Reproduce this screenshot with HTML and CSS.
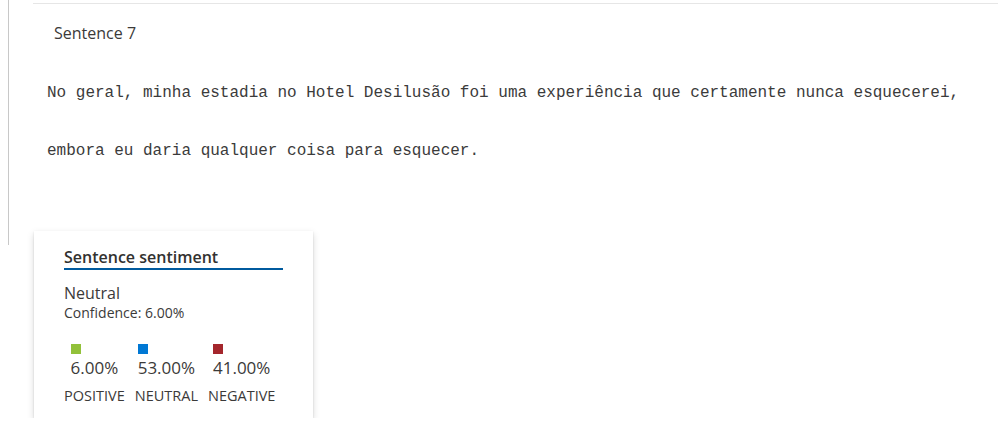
FILE: index.html
```html
<!DOCTYPE html>
<html>
<head>
<meta charset="utf-8">
<link rel="stylesheet" href="styles.css">
</head>
<body>
<div class="section">
  <div class="rule"></div>
  <div class="sentence-title">Sentence 7</div>
  <div class="sentence-text">No geral, minha estadia no Hotel Desilusão foi uma experiência que certamente nunca esquecerei,<br>embora eu daria qualquer coisa para esquecer.</div>
</div>
<div class="card">
  <div class="card-title">Sentence sentiment</div>
  <div class="label">Neutral</div>
  <div class="confidence">Confidence: 6.00%</div>
  <div class="scores">
    <div class="score">
      <div class="value-wrap">
        <span class="swatch swatch-pos"></span>
        <span class="value">6.00%</span>
      </div>
      <div class="name">POSITIVE</div>
    </div>
    <div class="score">
      <div class="value-wrap">
        <span class="swatch swatch-neu"></span>
        <span class="value">53.00%</span>
      </div>
      <div class="name">NEUTRAL</div>
    </div>
    <div class="score">
      <div class="value-wrap">
        <span class="swatch swatch-neg"></span>
        <span class="value">41.00%</span>
      </div>
      <div class="name">NEGATIVE</div>
    </div>
  </div>
</div>
</body>
</html>
```
FILE: styles.css
```css
html, body {
  margin: 0;
  padding: 0;
  background: #ffffff;
}
body {
  font-family: "Open Sans", "Noto Sans", sans-serif;
  color: #323130;
}
.section {
  margin-left: 8px;
  border-left: 1px solid #c8c8c8;
  height: 245px;
  box-sizing: border-box;
  padding-top: 3px;
}
.rule {
  margin-left: 24px;
  border-top: 1px solid #e6e6e6;
}
.sentence-title {
  margin-top: 18px;
  margin-left: 45px;
  font-size: 16px;
  line-height: 22px;
  color: #3b3a39;
}
.sentence-text {
  margin-top: 20px;
  margin-left: 38px;
  font-family: "Liberation Mono", "DejaVu Sans Mono", monospace;
  font-size: 16px;
  line-height: 58px;
  color: #3b3b3b;
}
.card {
  position: relative;
  margin-top: -14px;
  margin-left: 34px;
  width: 279px;
  height: 187px;
  box-sizing: border-box;
  padding: 15px 30px 0 30px;
  background: #ffffff;
  box-shadow: 0 3.2px 7.2px rgba(0,0,0,0.15), 0 0.6px 1.8px rgba(0,0,0,0.12);
}
.card-title {
  font-size: 16px;
  font-weight: 600;
  line-height: 22px;
  padding-bottom: 0;
  border-bottom: 2px solid #005a9e;
  width: 219px;
  color: #323130;
}
.label {
  margin-top: 12px;
  font-size: 16px;
  line-height: 22px;
  color: #3b3a39;
}
.confidence {
  font-size: 14px;
  line-height: 17px;
  color: #3b3a39;
}
.scores {
  display: flex;
  gap: 10px;
  margin-top: 23px;
}
.score {
  display: flex;
  flex-direction: column;
  align-items: center;
}
.value-wrap {
  display: flex;
  flex-direction: column;
  align-items: flex-start;
}
.swatch {
  display: block;
  width: 10px;
  height: 10px;
}
.swatch-pos { background: #92c13a; }
.swatch-neu { background: #0078d4; }
.swatch-neg { background: #a4262c; }
.value {
  margin-top: 3px;
  font-size: 17px;
  line-height: 22px;
  color: #3b3a39;
}
.name {
  margin-top: 8px;
  font-size: 14.5px;
  line-height: 18px;
  color: #3b3a39;
}
```
